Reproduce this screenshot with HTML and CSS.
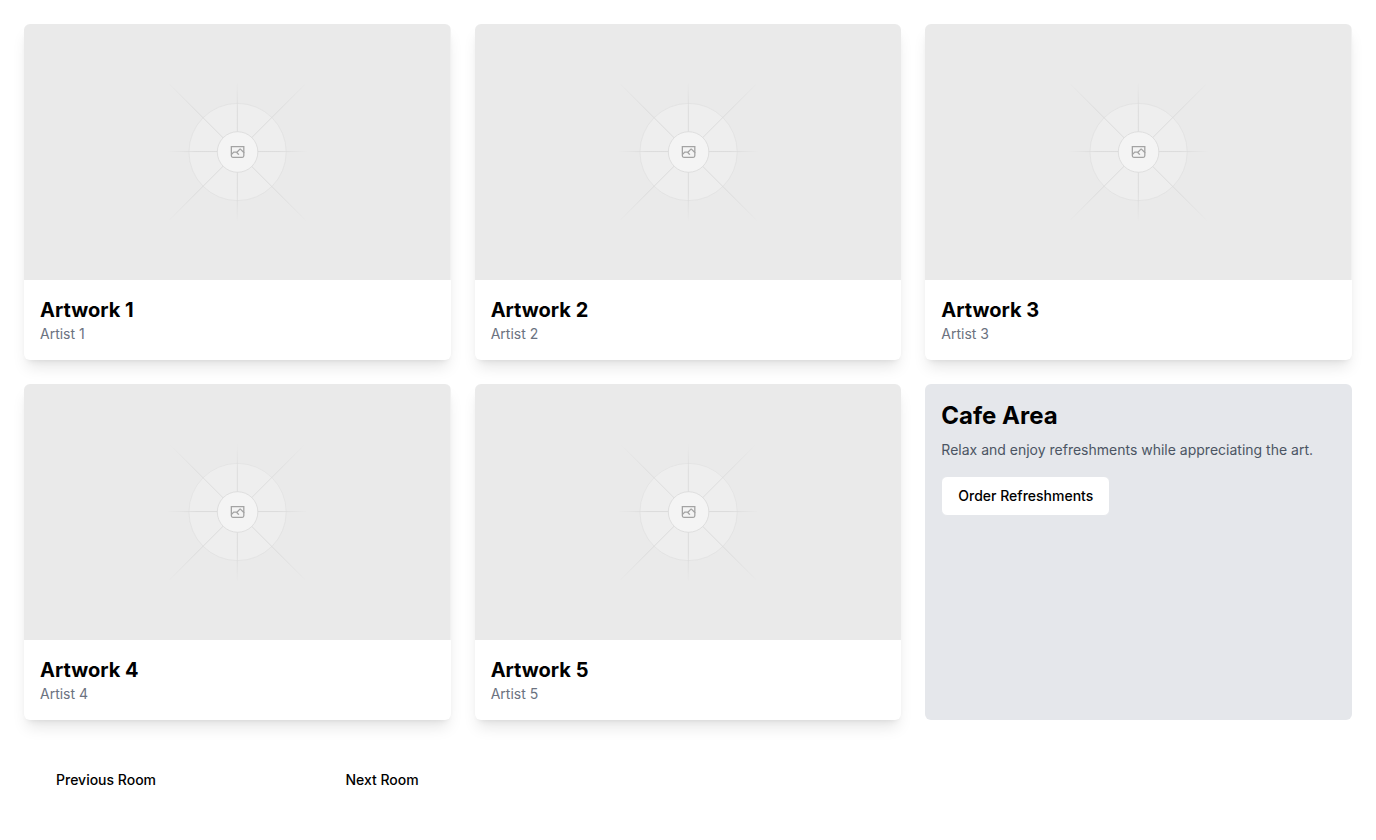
FILE: index.html
```html
<!DOCTYPE html>
<html lang="en">
<head>
<meta charset="utf-8">
<meta name="viewport" content="width=device-width, initial-scale=1">
<title>Art Gallery</title>
<link rel="stylesheet" href="styles.css">
</head>
<body>
<svg class="defs" aria-hidden="true">
  <defs>
    <linearGradient id="ray-h" gradientUnits="userSpaceOnUse" x1="404" y1="0" x2="796" y2="0">
      <stop stop-color="#c9c9c9" stop-opacity="0"/><stop offset=".208" stop-color="#c9c9c9"/><stop offset=".792" stop-color="#c9c9c9"/><stop offset="1" stop-color="#c9c9c9" stop-opacity="0"/>
    </linearGradient>
    <linearGradient id="ray-v" href="#ray-h" x1="0" y1="404" x2="0" y2="796"/>
    <linearGradient id="ray-d" href="#ray-h" x1="406" y1="406" x2="794" y2="794"/>
    <linearGradient id="ray-u" href="#ray-h" x1="406" y1="794" x2="794" y2="406"/>
    <symbol id="placeholder" viewBox="0 0 1200 1200" preserveAspectRatio="xMidYMid slice">
      <rect x="-1200" width="3600" height="1200" fill="#eaeaea"/>
      <g opacity=".5">
        <circle cx="600.7" cy="600" r="136.7" fill="#fafafa" opacity=".5"/>
        <circle cx="600.7" cy="600" r="136.7" fill="none" stroke="#c9c9c9" stroke-width="2.4" opacity=".5"/>
        <path d="M404 598.7h392" stroke="url(#ray-h)" stroke-width="2.4"/>
        <path d="M600 404v392" stroke="url(#ray-v)" stroke-width="2.4"/>
        <path d="M406 406 794 794" stroke="url(#ray-d)" stroke-width="2.4"/>
        <path d="M406 794 794 406" stroke="url(#ray-u)" stroke-width="2.4"/>
      </g>
      <circle cx="600.7" cy="600" r="57" fill="#f4f4f4" stroke="#dadada" stroke-width="2.4"/>
      <path fill="#a3a3a3" fill-rule="evenodd" d="M616.426 586.58h-31.434v16.176l3.553-3.554.531-.531h9.068l.074-.074 8.463-8.463h2.565l7.18 7.181V586.58Zm-15.715 14.654 3.698 3.699 1.283 1.282-2.565 2.565-1.282-1.283-5.2-5.199h-6.066l-5.514 5.514-.073.073v2.876a2.418 2.418 0 0 0 2.418 2.418h26.598a2.418 2.418 0 0 0 2.418-2.418v-8.317l-8.463-8.463-7.181 7.181-.071.072Zm-19.347 5.442v4.085a6.045 6.045 0 0 0 6.046 6.045h26.598a6.044 6.044 0 0 0 6.045-6.045v-7.108l1.356-1.355-1.282-1.283-.074-.073v-17.989h-38.689v23.43l-.146.146.146.147Z"/>
    </symbol>
  </defs>
</svg>
<main class="gallery">
  <article class="card">
    <svg class="card-image" role="img" aria-label="Artwork 1"><use href="#placeholder"/></svg>
    <div class="card-body"><h3 class="card-title">Artwork 1</h3><p class="card-artist">Artist 1</p></div>
  </article>
  <article class="card">
    <svg class="card-image" role="img" aria-label="Artwork 2"><use href="#placeholder"/></svg>
    <div class="card-body"><h3 class="card-title">Artwork 2</h3><p class="card-artist">Artist 2</p></div>
  </article>
  <article class="card">
    <svg class="card-image" role="img" aria-label="Artwork 3"><use href="#placeholder"/></svg>
    <div class="card-body"><h3 class="card-title">Artwork 3</h3><p class="card-artist">Artist 3</p></div>
  </article>
  <article class="card">
    <svg class="card-image" role="img" aria-label="Artwork 4"><use href="#placeholder"/></svg>
    <div class="card-body"><h3 class="card-title">Artwork 4</h3><p class="card-artist">Artist 4</p></div>
  </article>
  <article class="card">
    <svg class="card-image" role="img" aria-label="Artwork 5"><use href="#placeholder"/></svg>
    <div class="card-body"><h3 class="card-title">Artwork 5</h3><p class="card-artist">Artist 5</p></div>
  </article>
  <section class="cafe">
    <h2 class="cafe-title">Cafe Area</h2>
    <p class="cafe-text">Relax and enjoy refreshments while appreciating the art.</p>
    <button class="button button-outline" type="button">Order Refreshments</button>
  </section>
  <nav class="rooms" aria-label="Rooms">
    <button class="button" type="button">Previous Room</button>
    <button class="button" type="button">Next Room</button>
  </nav>
</main>
</body>
</html>
```
FILE: styles.css
```css
* {
  box-sizing: border-box;
}

body {
  margin: 0;
  background: #fff;
  color: #000;
  font-family: Inter, sans-serif;
  font-size: 14px;
  line-height: 20px;
}

h2, h3, p {
  margin: 0;
}

.defs {
  position: absolute;
  width: 0;
  height: 0;
}

.gallery {
  display: grid;
  grid-template-columns: repeat(3, minmax(0, 1fr));
  gap: 24px;
  padding: 24px;
}

.card {
  overflow: hidden;
  border-radius: 6px;
  background: #fff;
  box-shadow: 0 10px 15px -3px rgb(0 0 0 / 10%), 0 4px 6px -4px rgb(0 0 0 / 10%);
}

.card-image {
  display: block;
  width: 100%;
  height: 256px;
}

.card-body {
  padding: 16px;
}

.card-title {
  font-size: 20px;
  font-weight: 700;
  line-height: 28px;
}

.card-artist {
  color: #6b7280;
}

.cafe {
  padding: 16px;
  border-radius: 6px;
  background: #e5e7eb;
}

.cafe-title {
  margin-bottom: 8px;
  font-size: 24px;
  font-weight: 700;
  line-height: 32px;
}

.cafe-text {
  margin-bottom: 16px;
  color: #4b5563;
}

.button {
  height: 40px;
  padding: 0 16px;
  border: 0;
  border-radius: 6px;
  background: transparent;
  color: #000;
  font: inherit;
  font-weight: 500;
  cursor: pointer;
}

.button-outline {
  border: 1px solid #e5e7eb;
  background: #fff;
}

.rooms {
  display: flex;
  justify-content: space-between;
  align-items: center;
  padding: 16px;
}
```
